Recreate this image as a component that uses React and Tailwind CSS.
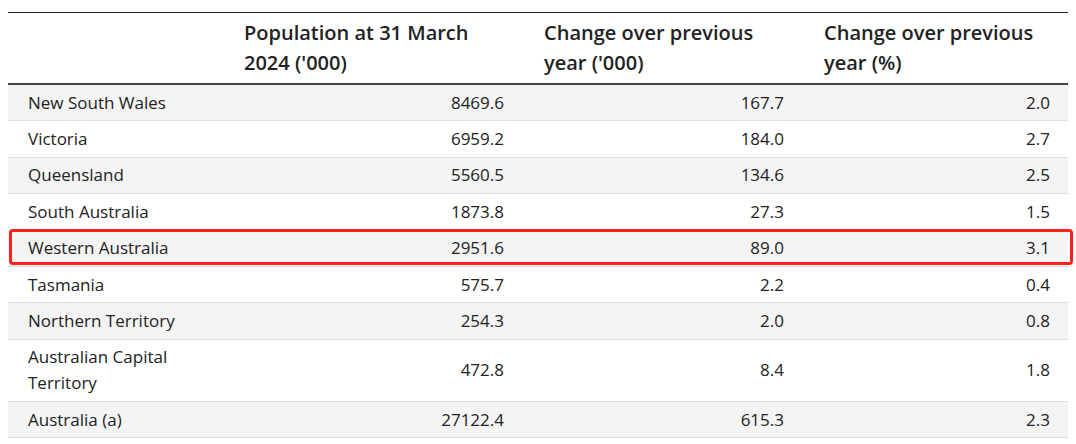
import React from "react";

const rows = [
  ["New South Wales", "8469.6", "167.7", "2.0"],
  ["Victoria", "6959.2", "184.0", "2.7"],
  ["Queensland", "5560.5", "134.6", "2.5"],
  ["South Australia", "1873.8", "27.3", "1.5"],
  ["Western Australia", "2951.6", "89.0", "3.1"],
  ["Tasmania", "575.7", "2.2", "0.4"],
  ["Northern Territory", "254.3", "2.0", "0.8"],
  ["Australian Capital Territory", "472.8", "8.4", "1.8"],
  ["Australia (a)", "27122.4", "615.3", "2.3"],
];

const App = () => {
  return (
    <div
      className="bg-white w-[1076px] h-[444px] px-2 pt-3 text-[#222]"
      style={{ fontFamily: '"Open Sans", "Liberation Sans", sans-serif' }}
    >
      <div className="relative w-[1060px]">
        <table className="w-full table-fixed border-collapse">
          <colgroup>
            <col className="w-[216px]" />
            <col className="w-[300px]" />
            <col className="w-[280px]" />
            <col className="w-[264px]" />
          </colgroup>
          <thead>
            <tr className="border-t border-[#222] border-b-2 border-b-[#444]">
              <th className="px-5 py-[5px]"></th>
              <th className="px-5 py-[5px] text-left font-semibold text-[20px] leading-[30px]">
                Population at 31 March 2024 ('000)
              </th>
              <th className="px-5 py-[5px] text-left font-semibold text-[20px] leading-[30px]">
                Change over previous year ('000)
              </th>
              <th className="pl-5 pr-4 py-[5px] text-left font-semibold text-[20px] leading-[30px]">
                Change over previous year (%)
              </th>
            </tr>
          </thead>
          <tbody>
            {rows.map((r, i) => (
              <tr
                key={r[0]}
                className={`border-b border-[#dedede] ${i % 2 === 0 ? "bg-[#f4f4f4]" : "bg-white"}`}
              >
                <td className="px-5 py-[4.7px] text-[17px] leading-[26px]">{r[0]}</td>
                <td className="px-5 py-[4.7px] text-[17px] leading-[26px] text-right">{r[1]}</td>
                <td className="px-5 py-[4.7px] text-[17px] leading-[26px] text-right">{r[2]}</td>
                <td className="pl-5 pr-[18px] py-[4.7px] text-[17px] leading-[26px] text-right">{r[3]}</td>
              </tr>
            ))}
          </tbody>
        </table>

        {/* highlight around Western Australia */}
        <div className="absolute left-[1px] top-[217px] w-[1064px] h-[36px] border-[3px] border-[#ff2218] rounded-[4px] pointer-events-none" />
      </div>
    </div>
  );
};

export default App;
